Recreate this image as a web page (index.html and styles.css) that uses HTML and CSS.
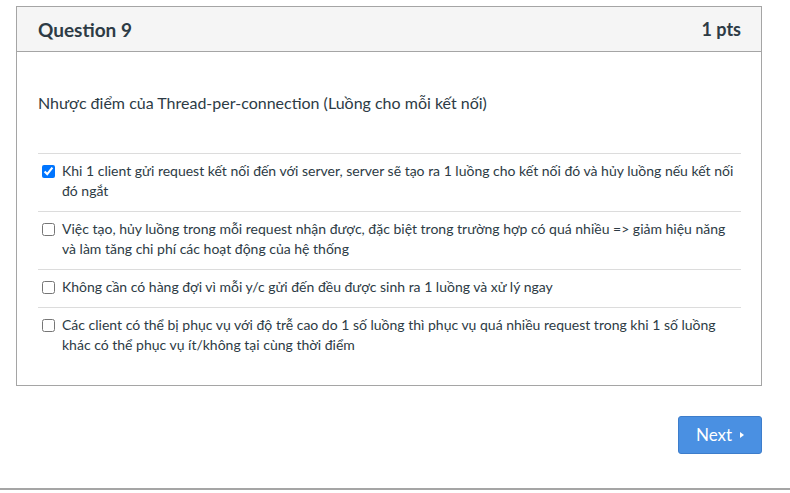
FILE: index.html
```html
<!DOCTYPE html>
<html lang="vi">
<head>
<meta charset="utf-8">
<link rel="stylesheet" href="styles.css">
</head>
<body>
<div class="page">
  <div class="card">
    <div class="card-header">
      <span class="q-title">Question 9</span>
      <span class="q-pts">1 pts</span>
    </div>
    <div class="card-body">
      <p class="q-text">Nhược điểm của Thread-per-connection (Luồng cho mỗi kết nối)</p>
      <div class="answers">
        <label class="answer"><input type="checkbox" checked><span>Khi 1 client gửi request kết nối đến với server, server sẽ tạo ra 1 luồng cho kết nối đó và hủy luồng nếu kết nối đó ngắt</span></label>
        <label class="answer"><input type="checkbox"><span>Việc tạo, hủy luồng trong mỗi request nhận được, đặc biệt trong trường hợp có quá nhiều =&gt; giảm hiệu năng và làm tăng chi phí các hoạt động của hệ thống</span></label>
        <label class="answer"><input type="checkbox"><span>Không cần có hàng đợi vì mỗi y/c gửi đến đều được sinh ra 1 luồng và xử lý ngay</span></label>
        <label class="answer"><input type="checkbox"><span>Các client có thể bị phục vụ với độ trễ cao do 1 số luồng thì phục vụ quá nhiều request trong khi 1 số luồng khác có thể phục vụ ít/không tại cùng thời điểm</span></label>
      </div>
    </div>
  </div>
  <div class="actions">
    <button class="next-btn">Next <span class="tri"></span></button>
  </div>
  <div class="bottom-rule"></div>
</div>
</body>
</html>
```

FILE: styles.css
```css
html, body {
  margin: 0;
  padding: 0;
  background: #fff;
  font-family: Lato, "Noto Sans", sans-serif;
  color: #2d3b45;
}
.page {
  width: 790px;
  padding-top: 6px;
}
.card {
  margin-left: 16px;
  width: 744px;
  border: 1px solid #a5a5a5;
}
.card-header {
  display: flex;
  justify-content: space-between;
  align-items: center;
  height: 44px;
  padding: 0 20px 0 21px;
  background: #f5f5f5;
  border-bottom: 1px solid #a5a5a5;
  font-weight: bold;
  font-size: 18px;
}
.q-title {
  font-size: 19px;
}
.card-body {
  padding: 39px 20px 20px 21px;
}
.q-text {
  margin: 0 0 38px 0;
  font-size: 16px;
  line-height: 24px;
}
.answers {
  border-top: 1px solid #dcdcdc;
}
.answer {
  display: flex;
  align-items: flex-start;
  padding: 7px 0 10px 0;
  border-bottom: 1px solid #dcdcdc;
  font-size: 14px;
  line-height: 20px;
  color: #2d3b45;
}
.answer:last-child {
  border-bottom: none;
}
.answer input {
  margin: 4px 7px 0 4px;
  width: 13px;
  height: 13px;
  flex: none;
}
.actions {
  display: flex;
  justify-content: flex-end;
  width: 762px;
  padding-top: 30px;
}
.next-btn {
  width: 84px;
  height: 38px;
  background: #4a90e2;
  border: 1px solid #3d7dcb;
  border-radius: 3px;
  color: #fff;
  font-family: Lato, "Noto Sans", sans-serif;
  font-size: 17px;
  display: flex;
  align-items: center;
  justify-content: center;
  gap: 8px;
  padding: 0 0 2px 0;
}
.tri {
  width: 0;
  height: 0;
  margin-top: 2px;
  border-top: 3.5px solid transparent;
  border-bottom: 3.5px solid transparent;
  border-left: 4px solid #fff;
}
.bottom-rule {
  margin-top: 34px;
  height: 2px;
  background: #a5a5a5;
}
```
